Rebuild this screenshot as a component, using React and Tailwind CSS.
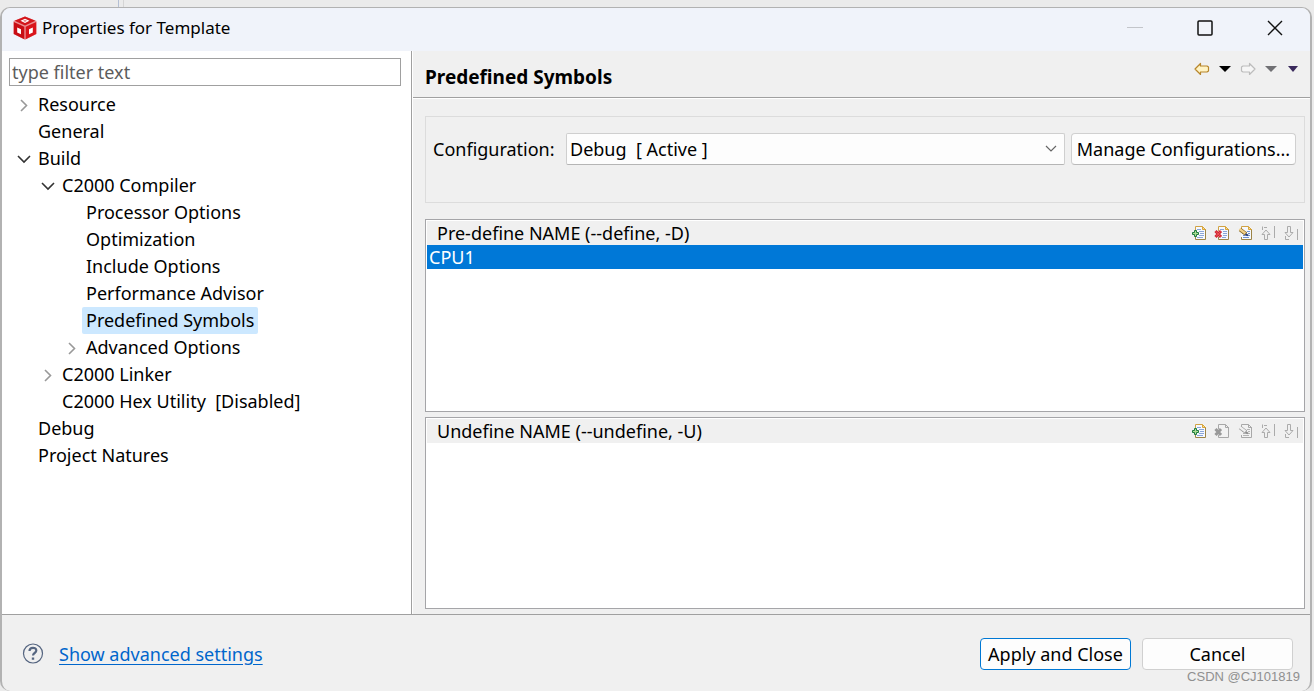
import { useState } from "react"

const TREE = [
  { label: "Resource", state: "closed" },
  { label: "General" },
  {
    label: "Build",
    state: "open",
    children: [
      {
        label: "C2000 Compiler",
        state: "open",
        children: [
          { label: "Processor Options" },
          { label: "Optimization" },
          { label: "Include Options" },
          { label: "Performance Advisor" },
          { label: "Predefined Symbols" },
          { label: "Advanced Options", state: "closed" },
        ],
      },
      { label: "C2000 Linker", state: "closed" },
      { label: "C2000 Hex Utility\u00a0 [Disabled]" },
    ],
  },
  { label: "Debug" },
  { label: "Project Natures" },
]

function Logo() {
  return (
    <svg width="24" height="24" viewBox="0 0 24 24" fill="none">
      <path d="M12 0.500 23.500 5v13L12 23.800 0.500 18V5z" fill="#eb8f92" />
      <path d="M12 0.500 22.500 4.800 12 9.500 1.500 4.800z" fill="#d3161c" />
      <path d="M0.800 6 11.300 10.700v12.600L0.800 18z" fill="#c80d14" />
      <path d="M23.200 6 12.700 10.700v12.600L23.200 18z" fill="#d9141b" />
      <path d="M12 2.800 16.500 4.800 12 6.900 7.500 4.800z" fill="#fff" />
      <path d="M12 3.800 14 4.800 12 5.900 10 4.800z" fill="#e98a8d" />
      <path d="M4.200 11.500 8 13.200v5L4.200 16.400z" fill="#fff" />
      <path d="M19.800 11.500 16 13.200v5l3.800-1.800z" fill="#fff" />
    </svg>
  )
}

function Chevron({ open }) {
  return (
    <svg width="16" height="16" viewBox="0 0 16 16" fill="none">
      {open ? (
        <path d="M2 5 8 11 14 5" stroke="#333" strokeWidth="1.600" />
      ) : (
        <path d="M5 3 10.500 8.500 5 14" stroke="#999" strokeWidth="1.600" />
      )}
    </svg>
  )
}

function ArrowIcon({ stroke, fill, flip }) {
  return (
    <svg width="16" height="14" viewBox="0 0 16 14" fill="none">
      <path
        d={flip
          ? "M15 7 9.500 1.500V4H3L1.500 5v4L3 10h6.500v2.500z"
          : "M1 7 6.500 1.500V4H13l1.500 1v4L13 10H6.500v2.500z"}
        fill={fill}
        stroke={stroke}
        strokeWidth="1.200"
        strokeLinejoin="round"
      />
    </svg>
  )
}

function Triangle({ fill, width = 12 }) {
  return (
    <svg width={width} height="6" viewBox="0 0 12 6" preserveAspectRatio="none">
      <path d="M0 0h12L6 6z" fill={fill} />
    </svg>
  )
}

// Sheet of paper shared by the add, delete and edit icons
function Page({ off }) {
  return (
    <>
      <path d="M4 1h8l3 3v11H4z" fill={off ? "#f2f2f2" : "#f6f9ff"} />
      <path d="M4.500 6V1.500h7" stroke={off ? "#a8a8a8" : "#d0a245"} />
      <path d="M14.500 4v10.500h-10V12" stroke={off ? "#a8a8a8" : "#9c8446"} />
      <path d="M11.500 1.500v3h3z" stroke={off ? "#a8a8a8" : "#d9a53a"} fill={off ? "none" : "#f6dc98"} />
    </>
  )
}

function AddIcon() {
  return (
    <svg width="16" height="16" viewBox="0 0 16 16" fill="none">
      <Page />
      <path d="M6 4.500h4M8 6.500h5M9 8.500h4M8 10.500h5M6 12.500h6" stroke="#8aa6d8" />
      <path d="M3.500 5.500h2v2h2v2h-2v2h-2v-2h-2v-2h2z" fill="#a9dc92" stroke="#1c7a3c" />
    </svg>
  )
}

function DeleteIcon({ off }) {
  return (
    <svg width="16" height="16" viewBox="0 0 16 16" fill="none">
      <Page off={off} />
      {!off && <path d="M6 4.500h4M9 6.500h4M9 8.500h4M9 10.500h4M8 12.500h4" stroke="#8aa6d8" />}
      <path d="m1.500 6 5.500 6M7 6l-5.500 6" stroke={off ? "#999" : "#cf2530"} strokeWidth="3" />
      {!off && <path d="m2 6.500 4.500 5M6.500 6.500 2 11.500" stroke="#ee5a5f" />}
    </svg>
  )
}

function EditIcon({ off }) {
  return (
    <svg width="16" height="16" viewBox="0 0 16 16" fill="none">
      <Page off={off} />
      <path d="M10 6.500h3M5 8.500h3M11 8.500h2M6 10.500h7M6 12.500h6" stroke={off ? "#b5b5b5" : "#6f8fd0"} />
      <path d="m3 4.500 6 4.500" stroke={off ? "#a0a0a0" : "#8a6a28"} strokeWidth="4" />
      <path d="m2.500 4 6 4.500" stroke={off ? "#f0f0f0" : "#f1cf87"} strokeWidth="2.200" />
      <path d="m8.500 9 2.500 1.500" stroke={off ? "#8c8c8c" : "#2b3d73"} strokeWidth="2" />
    </svg>
  )
}

function MoveIcon({ down }) {
  return (
    <svg width="16" height="16" viewBox="0 0 16 16" fill="none" stroke="#ababab">
      {down ? (
        <>
          <path d="M4.500 1.500h3v6h2.500L6 12 2 7.500h2.500z" />
          <path d="M2.500 11v3.500H6M14.500 4v11" />
        </>
      ) : (
        <>
          <path d="M4.500 14.500h3v-5h2.500L6 5 2 9.500h2.500z" />
          <path d="M2.500 5V1.500M4 2.500h3M14.500 1v12" />
        </>
      )}
    </svg>
  )
}

function ToolButton({ label, disabled, children }) {
  return (
    <button type="button" aria-label={label} disabled={disabled}>
      {children}
    </button>
  )
}

function TreeNode({ node, selected, onSelect }) {
  const active = node.label === selected
  return (
    <li>
      <div className="flex h-[27px] items-center gap-[2px]">
        <span className="w-4 shrink-0">
          {node.state && <Chevron open={node.state === "open"} />}
        </span>
        <button
          type="button"
          onClick={() => onSelect(node.label)}
          className={`h-[27px] whitespace-nowrap rounded-[2px] px-1 leading-[27px] ${active ? "bg-[#cce8ff]" : ""}`}
        >
          {node.label}
        </button>
      </div>
      {node.children && (
        <ul className="pl-6">
          {node.children.map((child) => (
            <TreeNode key={child.label} node={child} selected={selected} onSelect={onSelect} />
          ))}
        </ul>
      )}
    </li>
  )
}

function SymbolList({ title, items }) {
  const empty = items.length === 0
  return (
    <section className="flex min-h-0 flex-1 flex-col border border-[#a5a5a8] bg-white p-px">
      <div className="flex h-6 shrink-0 items-center justify-between bg-[#f0f0f0] pl-[10px] pr-1">
        <h2>{title}</h2>
        <div className="flex gap-[7px]">
          <ToolButton label="Add"><AddIcon /></ToolButton>
          <ToolButton label="Delete" disabled={empty}><DeleteIcon off={empty} /></ToolButton>
          <ToolButton label="Edit" disabled={empty}><EditIcon off={empty} /></ToolButton>
          <ToolButton label="Move up" disabled><MoveIcon /></ToolButton>
          <ToolButton label="Move down" disabled><MoveIcon down /></ToolButton>
        </div>
      </div>
      <ul>
        {items.map((item) => (
          <li key={item} className="h-6 bg-[#0078d7] px-[2px] leading-6 text-white">{item}</li>
        ))}
      </ul>
    </section>
  )
}

export default function App() {
  const [selected, setSelected] = useState("Predefined Symbols")

  return (
    <div className="flex h-screen flex-col overflow-hidden bg-[#ebebeb] font-['Noto_Sans','Open_Sans',sans-serif] text-[18px] leading-6 text-black">
      {/* Strip of the window behind */}
      <div className="flex h-[7px] shrink-0">
        <div className="w-[119px] border-r border-[#b4bfd4]" />
        <div className="w-[5px] border-r border-[#d5d5d5]" />
      </div>

      <div className="relative mr-[2px] flex min-h-0 flex-1 flex-col overflow-hidden rounded-[10px] border-2 border-t border-b-0 border-[#b2b2b2] bg-[#f0f0f0]">
        {/* Title bar */}
        <header className="flex h-[43px] shrink-0 items-center bg-[#f0f3fa] pb-[3px] pl-[11px] pr-[27px]">
          <Logo />
          <h1 className="ml-[5px] flex-1 text-[17px]">Properties for Template</h1>
          <div className="flex gap-[54px]">
            <button type="button" aria-label="Minimize">
              <svg width="16" height="16" viewBox="0 0 16 16"><path d="M0 7.500h16" stroke="#c3c5ca" /></svg>
            </button>
            <button type="button" aria-label="Maximize">
              <svg width="16" height="16" viewBox="0 0 16 16" fill="none"><rect x="1" y="1" width="14" height="14" rx="1" stroke="#111" strokeWidth="1.500" /></svg>
            </button>
            <button type="button" aria-label="Close">
              <svg width="16" height="16" viewBox="0 0 16 16"><path d="m1 1 14 14M15 1 1 15" stroke="#111" strokeWidth="1.400" /></svg>
            </button>
          </div>
        </header>

        <div className="flex min-h-0 flex-1">
          {/* Page tree */}
          <aside className="w-[410px] shrink-0 border-r border-[#a0a0a0] bg-white px-[7px] pt-[7px]">
            <input
              type="text"
              aria-label="Filter"
              placeholder="type filter text"
              className="h-7 w-[392px] border border-[#a0a0a0] bg-white px-[2px] outline-none placeholder:text-[#5c5c5c]"
            />
            <ul className="mt-[5px] pl-[7px]">
              {TREE.map((node) => (
                <TreeNode key={node.label} node={node} selected={selected} onSelect={setSelected} />
              ))}
            </ul>
          </aside>

          {/* Selected page */}
          <main className="flex min-w-0 flex-1 flex-col border-l border-white">
            <div className="flex h-[47px] shrink-0 justify-between border-b border-[#a0a0a0] pl-3 pr-3">
              <h2 className="pt-[14px] text-[19px] font-bold">Predefined Symbols</h2>
              <div className="flex h-9 items-center">
                <button type="button" aria-label="Back"><ArrowIcon stroke="#b8862b" fill="#fff3c4" /></button>
                <button type="button" aria-label="Back history" className="ml-[9px]"><Triangle fill="#000" /></button>
                <button type="button" aria-label="Forward" disabled className="ml-[9px]"><ArrowIcon flip stroke="#bcbcbc" fill="#f6f6f6" /></button>
                <button type="button" aria-label="Forward history" className="ml-[9px]"><Triangle fill="#707074" /></button>
                <button type="button" aria-label="Menu" className="ml-[11px]"><Triangle fill="#3a2a5c" width={10} /></button>
              </div>
            </div>

            <div className="flex min-h-0 flex-1 flex-col border-t border-white pb-[5px] pl-3 pr-[5px] pt-[17px]">
              <div className="flex h-[87px] shrink-0 items-start border border-[#dcdcdc] pl-[7px] pr-2 pt-4">
                <label htmlFor="configuration" className="w-[133px] shrink-0 leading-8">Configuration:</label>
                <div className="relative min-w-0 flex-1">
                  <select
                    id="configuration"
                    className="block h-8 w-full appearance-none rounded-[2px] border border-[#cfcfcf] border-b-[#b5b5b5] bg-[#fdfdfd] pl-[3px] pr-7"
                  >
                    <option>Debug&nbsp; [ Active ]</option>
                  </select>
                  <svg width="12" height="8" viewBox="0 0 12 8" fill="none" className="pointer-events-none absolute right-2 top-3">
                    <path d="m1 1 5 5 5-5" stroke="#666" strokeWidth="1.200" />
                  </svg>
                </div>
                <button type="button" className="ml-[6px] h-8 w-[225px] shrink-0 whitespace-nowrap rounded border border-[#d0d0d0] border-b-[#bababa] bg-[#fdfdfd]">
                  Manage Configurations...
                </button>
              </div>

              <div className="mt-4 flex min-h-0 flex-1 flex-col gap-[5px]">
                <SymbolList title="Pre-define NAME (--define, -D)" items={["CPU1"]} />
                <SymbolList title="Undefine NAME (--undefine, -U)" items={[]} />
              </div>
            </div>
          </main>
        </div>

        <footer className="flex h-[77px] shrink-0 items-center border-t border-[#a0a0a0] pl-5 pr-[17px] pt-[2px]">
          <button type="button" aria-label="Help">
            <svg width="22" height="22" viewBox="0 0 22 22" fill="none" stroke="#566681">
              <circle cx="11" cy="10.500" r="9.500" strokeWidth="1.200" />
              <path d="M7.500 8C7.500 3.800 14.300 3.800 14.300 7.500c0 2.500-3.300 2.500-3.300 5" strokeWidth="2.200" />
              <path d="M11 14.500v2.200" strokeWidth="2.400" />
            </svg>
          </button>
          <a href="#advanced" className="ml-[15px] text-[#0066cc] underline underline-offset-[3px]">Show advanced settings</a>
          <div className="ml-auto flex gap-[11px]">
            <button type="button" className="h-8 w-[151px] whitespace-nowrap rounded border border-[#0078d4] bg-[#fdfdfd]">Apply and Close</button>
            <button type="button" className="h-8 w-[151px] rounded border border-[#d0d0d0] bg-[#fdfdfd]">Cancel</button>
          </div>
        </footer>

        <span className="absolute bottom-[6px] right-[10px] font-['Liberation_Sans',sans-serif] text-[13px] leading-4 text-[#8f8f8f]">CSDN @CJ101819</span>
      </div>
    </div>
  )
}
